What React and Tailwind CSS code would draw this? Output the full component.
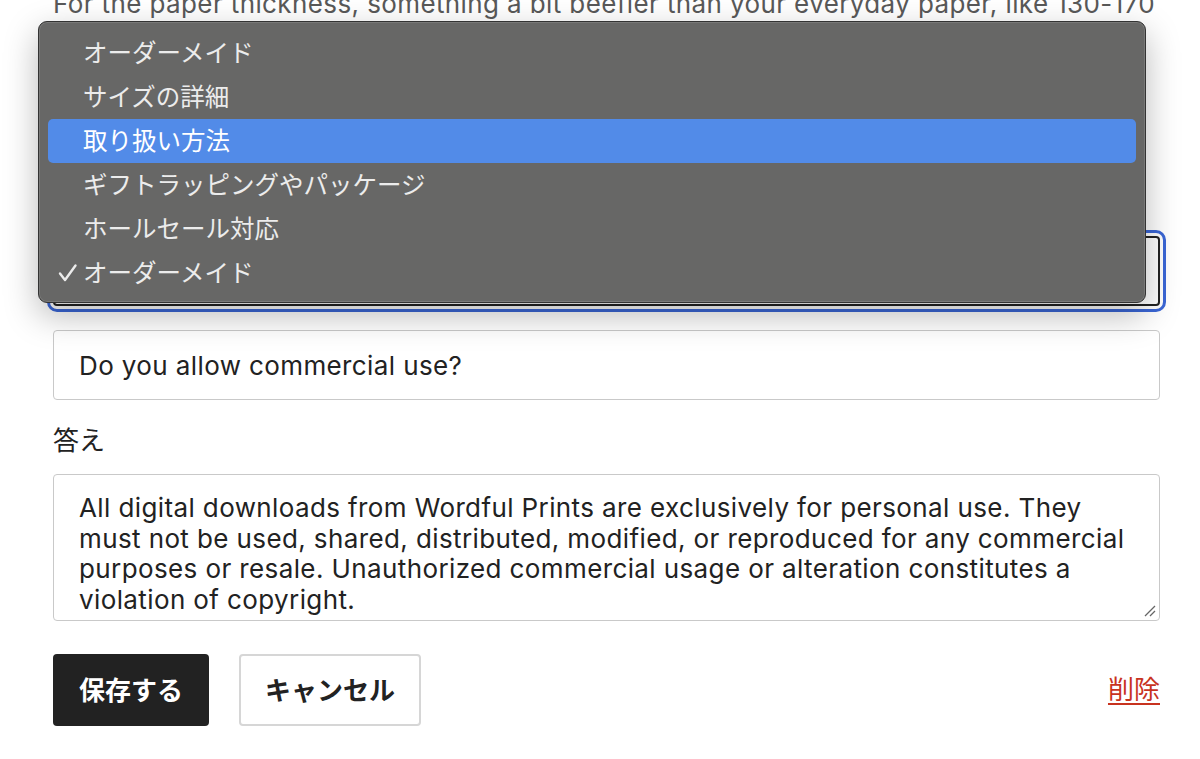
import React from "react";

const sans = { fontFamily: 'Inter, "Noto Sans CJK JP", sans-serif' };

const items = [
  { label: "オーダーメイド" },
  { label: "サイズの詳細" },
  { label: "取り扱い方法", active: true },
  { label: "ギフトラッピングやパッケージ" },
  { label: "ホールセール対応" },
  { label: "オーダーメイド", checked: true },
];

export default function App() {
  return (
    <div
      className="relative w-[1200px] h-[759px] overflow-hidden bg-white text-[#222222]"
      style={sans}
    >
      <div className="pl-[53px] w-[1160px] flex flex-col">
        <p className="mt-[-11px] text-[26px] leading-[30px] tracking-[0.015em] text-[#595959] whitespace-nowrap">
          For the paper thickness, something a bit beefier than your everyday paper, like 130-170
        </p>

        {/* select (focused) */}
        <div className="mt-[217px] h-[70px] w-full rounded-[4px] border-2 border-[#222222] outline-[3px] outline-solid outline-[#3a66d6] outline-offset-[3px] bg-white" />

        {/* question input */}
        <div className="mt-[24px] h-[70px] w-full rounded-[4px] border border-[#c9c9c9] flex items-center px-[25px] pt-[2px]">
          <span className="text-[26px] leading-[30px] tracking-[0.015em] text-[#222222]">Do you allow commercial use?</span>
        </div>

        <div className="mt-[26px] text-[26px] leading-[30px] text-[#222222]">答え</div>

        {/* textarea */}
        <div className="relative mt-[18px] h-[147px] w-full rounded-[4px] border border-[#c9c9c9] px-[25px] pt-[18px] text-[26px] leading-[30.5px] tracking-[0.015em] text-[#222222]">
          <div className="whitespace-nowrap">All digital downloads from Wordful Prints are exclusively for personal use. They</div>
          <div className="whitespace-nowrap">must not be used, shared, distributed, modified, or reproduced for any commercial</div>
          <div className="whitespace-nowrap">purposes or resale. Unauthorized commercial usage or alteration constitutes a</div>
          <div className="whitespace-nowrap">violation of copyright.</div>
          <svg className="absolute right-[3px] bottom-[3px]" width="14" height="14" viewBox="0 0 14 14">
            <path d="M13 3 L3 13 M13 8 L8 13" stroke="#666" strokeWidth="1.3" fill="none" />
          </svg>
        </div>

        {/* buttons */}
        <div className="mt-[33px] flex items-center">
          <button className="h-[72px] w-[156px] rounded-[4px] bg-[#222222] text-white text-[26px] font-bold flex items-center justify-center">
            保存する
          </button>
          <button className="ml-[30px] h-[72px] w-[182px] rounded-[4px] bg-white border-2 border-[#d6d6d6] text-[#222222] text-[26px] font-bold flex items-center justify-center">
            キャンセル
          </button>
          <a className="ml-auto text-[26px] leading-[30px] text-[#c8331f] underline underline-offset-[4px] decoration-[1.5px]">
            削除
          </a>
        </div>
      </div>

      {/* dropdown menu overlay */}
      <div className="absolute left-[38px] top-[21px] w-[1108px] h-[282px] rounded-[9px] bg-[#676766] border border-[#333333] shadow-[0_12px_34px_rgba(0,0,0,0.28),inset_0_0_0_1px_rgba(255,255,255,0.12)] py-[9px]">
        {items.map((it, i) => (
          <div
            key={i}
            className={
              "relative mx-[9px] h-[44px] rounded-[5px] flex items-center pl-[35px] text-[24.5px] text-[#ececec] " +
              (it.active ? "bg-[#528be8] text-white" : "")
            }
          >
            {it.checked && (
              <svg className="absolute left-[10px] top-[12px]" width="20" height="20" viewBox="0 0 20 20">
                <path d="M2 10.5 L7 17 L17.5 2.5" stroke="#ececec" strokeWidth="2.4" fill="none" strokeLinecap="round" strokeLinejoin="round" />
              </svg>
            )}
            {it.label}
          </div>
        ))}
      </div>
    </div>
  );
}
